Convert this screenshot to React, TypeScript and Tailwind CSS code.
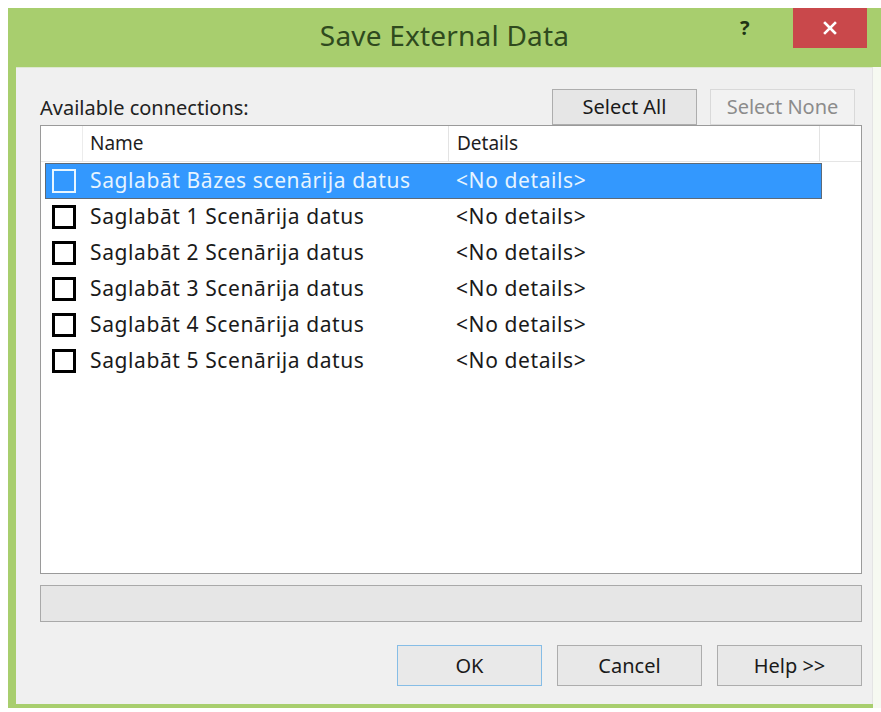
import React from "react";

const rows = [
  "Saglabāt Bāzes scenārija datus",
  "Saglabāt 1 Scenārija datus",
  "Saglabāt 2 Scenārija datus",
  "Saglabāt 3 Scenārija datus",
  "Saglabāt 4 Scenārija datus",
  "Saglabāt 5 Scenārija datus",
];

function DialogButton({ label, focused }: { label: string; focused?: boolean }) {
  return (
    <div
      className={
        "flex items-center justify-center w-[145px] h-[41px] border text-[20px] text-[#1a1a1a] " +
        (focused ? "border-[#86bde6] bg-[#e9e9e9]" : "border-[#adadad] bg-[#e8e8e8]")
      }
    >
      {label}
    </div>
  );
}

export default function App() {
  return (
    <div
      className="w-[881px] h-[712px] bg-white overflow-hidden pl-[8px] pt-[8px]"
      style={{ fontFamily: '"Noto Sans", "Open Sans", sans-serif' }}
    >
      <div className="w-[873px] h-[700px] flex flex-col">
        {/* title bar */}
        <div className="h-[59px] bg-[#a8ce6e] flex items-start">
          <div className="w-[148px]" />
          <div className="flex-1 h-[54px] flex items-center justify-center text-[28px] text-[#2f4a1e] tracking-[0.2px]">
            Save External Data
          </div>
          <div className="flex items-start">
            <div className="w-[60px] h-[40px] flex items-center justify-start pl-[7px] text-[20px] font-bold text-[#1f3314]">?</div>
            <div className="w-[74px] h-[40px] bg-[#c9484b] flex items-center justify-center">
              <svg width="16" height="16" viewBox="0 0 16 16">
                <path d="M3 3 L13 13 M13 3 L3 13" stroke="#fff" strokeWidth="2.6" strokeLinecap="square" />
              </svg>
            </div>
            <div className="w-[14px]" />
          </div>
        </div>

        {/* body with left frame edge */}
        <div className="flex-1 flex">
          <div className="w-[8px] bg-[#a8ce6e]" />
          <div className="flex-1 flex flex-col">
            <div className="flex-1 bg-[#f0f0f0] border-t border-[#dde8cf] border-r border-r-[#e4e4e4] flex flex-col pl-[24px] pt-[21px] text-[#1a1a1a]">
              <div className="flex items-end justify-between h-[36px] w-[822px]">
                <div className="text-[20px] pb-[2px] text-[#222]">Available connections:</div>
                <div className="flex gap-[13px] pr-[7px]">
                  <div className="flex items-center justify-center w-[145px] h-[36px] border border-[#adadad] bg-[#e6e6e6] text-[20px] text-[#1a1a1a]">
                    Select All
                  </div>
                  <div className="flex items-center justify-center w-[145px] h-[36px] border border-[#d9d9d9] bg-[#f2f2f2] text-[20px] text-[#8c8c8c]">
                    Select None
                  </div>
                </div>
              </div>

              {/* list view */}
              <div className="w-[822px] h-[449px] bg-white border border-[#9a9a9a] flex flex-col">
                <div className="h-[36px] flex border-b border-[#e5e5e5] text-[19px] text-[#1e1e1e]">
                  <div className="w-[42px] border-r border-[#ececec]" />
                  <div className="w-[366px] border-r border-[#e3e3e3] pl-[7px] flex items-center">Name</div>
                  <div className="w-[371px] border-r border-[#e3e3e3] pl-[8px] flex items-center">Details</div>
                  <div className="flex-1" />
                </div>
                <div className="pl-[4px] pt-[1px] flex flex-col">
                  {rows.map((name, i) => {
                    const sel = i === 0;
                    return (
                      <div
                        key={name}
                        className={
                          "w-[777px] h-[36px] flex items-center text-[21px] tracking-[0.6px] " +
                          (sel ? "bg-[#3398fe] border border-[#5d6a78] text-[#e6f4ff]" : "border border-transparent text-[#1a1a1a]")
                        }
                      >
                        <div className="w-[44px] flex items-center pl-[6px]">
                          <div
                            className={
                              "w-[24px] h-[24px] " +
                              (sel ? "border-[2px] border-[#e8f6ff] bg-[#3398fe]" : "border-[3px] border-black bg-white")
                            }
                          />
                        </div>
                        <div className="w-[366px]">{name}</div>
                        <div>&lt;No details&gt;</div>
                      </div>
                    );
                  })}
                </div>
              </div>

              {/* status strip */}
              <div className="mt-[11px] w-[822px] h-[37px] bg-[#e6e6e6] border border-[#a9a9a9]" />

              {/* command buttons */}
              <div className="mt-[23px] flex justify-end gap-[15px] w-[822px]">
                <DialogButton label="OK" focused />
                <DialogButton label="Cancel" />
                <DialogButton label="Help >>" />
              </div>
            </div>
            <div className="h-[4px] bg-[#a8ce6e]" />
          </div>
          <div className="w-[8px] bg-[#f6f9f1]" />
        </div>
      </div>
    </div>
  );
}
